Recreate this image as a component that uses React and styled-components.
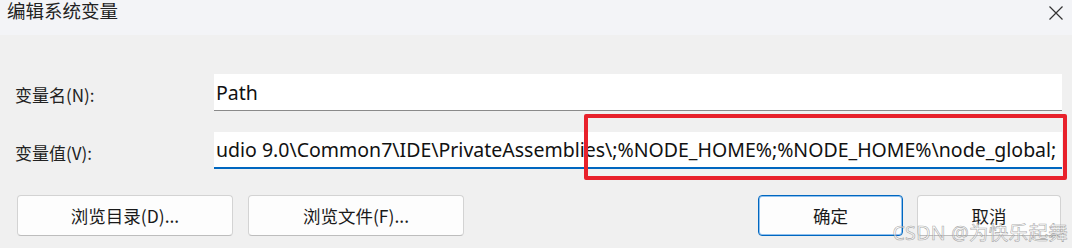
import React from 'react';
import styled, {createGlobalStyle} from 'styled-components';

const GlobalStyle = createGlobalStyle`
	html, body {
		margin: 0;
		padding: 0;
		background: #f0f0f0;
	}
	body {
		font-family: "Noto Sans", "Noto Sans CJK SC", sans-serif;
	}
`;

const Dialog = styled.div`
	position: relative;
	width: 1072px;
	height: 248px;
	overflow: hidden;
	background-color: #f0f0f0;
	color: #1a1a1a;
`;

const TitleBar = styled.div`
	display: flex;
	justify-content: space-between;
	align-items: flex-start;
	height: 35px;
	padding: 0 8px 0 7px;
	box-sizing: border-box;
	background-color: #f3f4f7;
`;

const Title = styled.div`
	font-family: "Noto Sans CJK SC", sans-serif;
	font-size: 18.5px;
	line-height: 20px;
	color: #222;
`;

const CloseButton = styled.button`
	border: none;
	background: none;
	padding: 0;
	margin-top: 5px;
	width: 16px;
	height: 16px;
	display: flex;
`;

const Form = styled.div`
	display: flex;
	flex-direction: column;
	gap: 21px;
	padding: 39px 10px 0 15px;
`;

const Row = styled.div`
	display: flex;
	align-items: center;
`;

const Label = styled.label`
	width: 199px;
	padding-top: 4px;
	font-family: "Noto Sans CJK SC", sans-serif;
	font-size: 17px;
	color: #222;
`;

const Field = styled.div`
	width: 848px;
	height: 37px;
	box-sizing: border-box;
	background-color: #ffffff;
	border-bottom: ${(p) => (p.focused ? '2px solid #0067c0' : '1px solid #8a8a8a')};
	padding: 0 0 0 2px;
	display: flex;
	align-items: center;
	overflow: hidden;
	white-space: nowrap;
	font-family: "Noto Sans", sans-serif;
	font-size: 19.5px;
	color: #111;
`;

const ButtonRow = styled.div`
	display: flex;
	padding: 26px 11px 0 17px;
`;

const ButtonGroup = styled.div`
	display: flex;
	gap: ${(p) => p.gap}px;
`;

const Spacer = styled.div`
	flex: 1;
`;

const Button = styled.button`
	width: ${(p) => p.w}px;
	height: 41px;
	box-sizing: border-box;
	border-radius: 4px;
	background-color: #fdfdfd;
	border: 1px solid ${(p) => (p.primary ? '#0067c0' : '#d3d3d3')};
	border-bottom-color: ${(p) => (p.primary ? '#0067c0' : '#bdbdbd')};
	box-shadow: ${(p) => (p.primary ? 'inset 0 0 0 1px #8fc0ee' : 'none')};
	font-family: "Noto Sans CJK SC", sans-serif;
	font-size: 17.5px;
	color: #1a1a1a;
	padding: 0;
`;

const Highlight = styled.div`
	position: absolute;
	left: 584px;
	top: 114px;
	width: 483px;
	height: 66px;
	box-sizing: border-box;
	border: 4px solid #e8212b;
	border-radius: 2px;
`;

const Watermark = styled.div`
	position: absolute;
	right: 4px;
	bottom: 2px;
	font-family: "Noto Sans", "Noto Sans CJK SC", sans-serif;
	font-size: 19.5px;
	color: rgba(255, 255, 255, 0.55);
	-webkit-text-stroke: 0.6px rgba(110, 110, 110, 0.6);
	letter-spacing: 0.3px;
`;

export default function App() {
	return (
		<Dialog>
			<GlobalStyle />
			<TitleBar>
				<Title>编辑系统变量</Title>
				<CloseButton aria-label="关闭">
					<svg width="16" height="16" viewBox="0 0 16 16">
						<path d="M1.5 1.5 L14.5 14.5 M14.5 1.5 L1.5 14.5" stroke="#333" strokeWidth="1.2" fill="none" />
					</svg>
				</CloseButton>
			</TitleBar>
			<Form>
				<Row>
					<Label>变量名(N):</Label>
					<Field>Path</Field>
				</Row>
				<Row>
					<Label>变量值(V):</Label>
					<Field focused>udio 9.0\Common7\IDE\PrivateAssemblies\;%NODE_HOME%;%NODE_HOME%\node_global;</Field>
				</Row>
			</Form>
			<ButtonRow>
				<ButtonGroup gap={15}>
					<Button w={216}>浏览目录(D)...</Button>
					<Button w={216}>浏览文件(F)...</Button>
				</ButtonGroup>
				<Spacer />
				<ButtonGroup gap={14}>
					<Button w={145} primary>确定</Button>
					<Button w={144}>取消</Button>
				</ButtonGroup>
			</ButtonRow>
			<Highlight />
			<Watermark>CSDN @为快乐起舞</Watermark>
		</Dialog>
	);
}
